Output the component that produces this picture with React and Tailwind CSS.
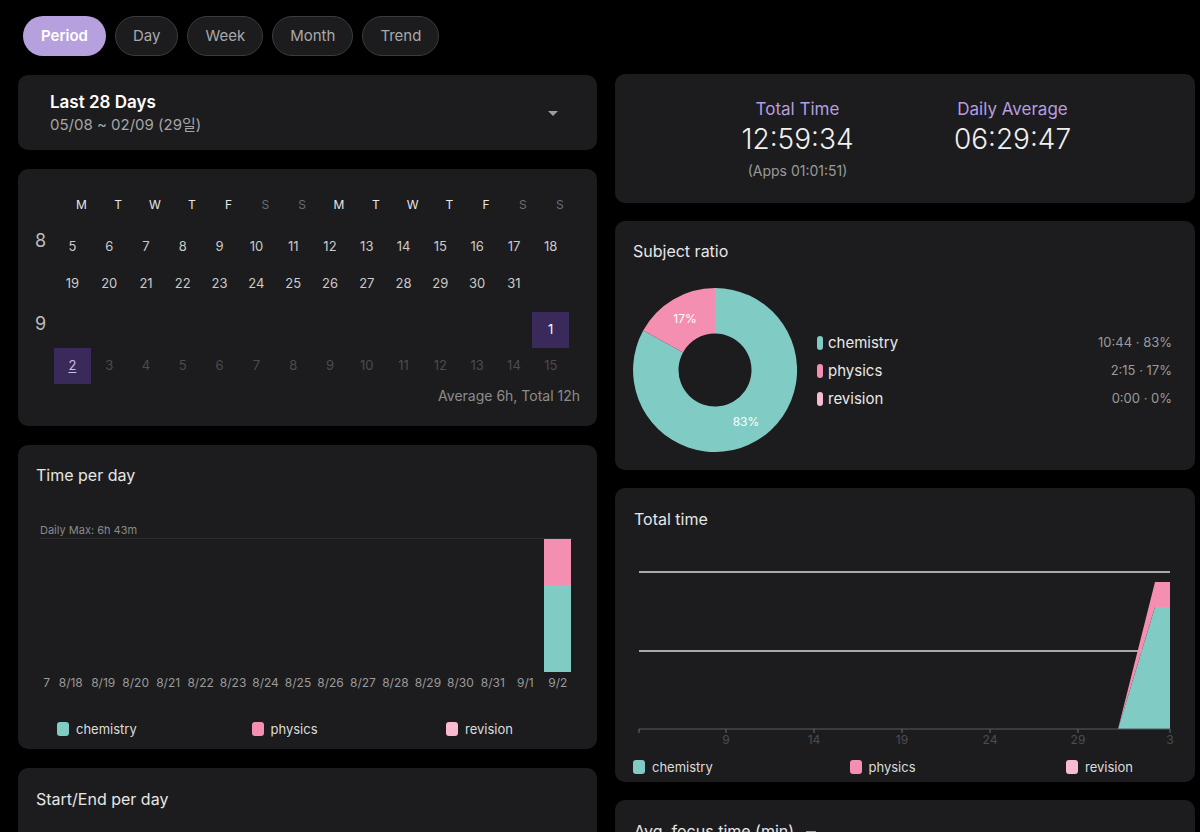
import React from 'react'

const TEAL = '#80cbc4'
const PINK = '#f48fb1'
const LPINK = '#f8bbd0'

const TABS = ['Period', 'Day', 'Week', 'Month', 'Trend']
const HEAD = ['M', 'T', 'W', 'T', 'F', 'S', 'S', 'M', 'T', 'W', 'T', 'F', 'S', 'S']

function Card({ className = '', children }) {
  return <div className={`bg-[#1c1c1e] rounded-[10px] ${className}`}>{children}</div>
}

function Tabs() {
  return (
    <div className="flex gap-[9px] pl-[23px] pt-[16px]">
      {TABS.map((t, i) =>
        i === 0 ? (
          <div key={t} className="h-[40px] px-[18px] rounded-full bg-[#b7a0de] text-white font-semibold text-[15px] flex items-center">
            {t}
          </div>
        ) : (
          <div key={t} className="h-[40px] px-[17px] rounded-full bg-[#1c1c1e] border border-[#3c3c3e] text-[#a9a9a9] text-[15px] flex items-center">
            {t}
          </div>
        )
      )}
    </div>
  )
}

function PeriodSelect() {
  return (
    <Card className="h-[75px] pl-[32px] pr-[38px] flex items-center justify-between">
      <div className="pt-[2px]">
        <div className="text-[17px] font-semibold text-white leading-[22px]">Last 28 Days</div>
        <div className="text-[15px] text-[#a6a6a6] leading-[22px] mt-[1px]">05/08 ~ 02/09 (29일)</div>
      </div>
      <svg width="12" height="7" viewBox="0 0 12 7" className="mt-[2px]">
        <polygon points="1,1 11,1 6,6" fill="#9d9d9d" />
      </svg>
    </Card>
  )
}

function DayCell({ d }) {
  if (!d) return <div className="w-[36.8px] h-[36px]" />
  let cls = 'text-[#cacaca]'
  if (d.dim) cls = 'text-[#4b4b4d]'
  if (d.hl) cls = 'bg-[#3a2a5c] text-white'
  return (
    <div className={`w-[36.8px] h-[36px] flex items-center justify-center text-[13px] ${cls}`}>
      <span className={d.u ? 'underline underline-offset-2 text-[#cbbfe4]' : ''}>{d.n}</span>
    </div>
  )
}

function CalRow({ label, days, className = '' }) {
  return (
    <div className={`flex ${className}`}>
      <div className="w-[36px] pl-[17px] text-[18px] leading-[24px] text-[#bdbdbd]">{label}</div>
      <div className="flex">
        {days.map((d, i) => (
          <DayCell key={i} d={d} />
        ))}
      </div>
    </div>
  )
}

function Calendar() {
  const r1 = Array.from({ length: 14 }, (_, i) => ({ n: i + 5 }))
  const r2 = Array.from({ length: 14 }, (_, i) => (i < 13 ? { n: i + 19 } : null))
  const r3 = Array.from({ length: 14 }, (_, i) => (i === 13 ? { n: 1, hl: true } : null))
  const r4 = Array.from({ length: 14 }, (_, i) => (i === 0 ? { n: 2, hl: true, u: true } : { n: i + 2, dim: true }))
  return (
    <Card className="h-[257px] pt-[26px] pr-[17px]">
      <div className="flex">
        <div className="w-[36px]" />
        <div className="flex ml-[9px]">
          {HEAD.map((h, i) => (
            <div
              key={i}
              className={`w-[36.8px] h-[20px] flex items-center justify-center text-[12px] ${i % 7 >= 5 ? 'text-[#6d6d6f]' : 'text-[#e6e6e6]'}`}
            >
              {h}
            </div>
          ))}
        </div>
      </div>
      <CalRow label="8" days={r1} className="mt-[14px]" />
      <CalRow label="" days={r2} className="mt-[1px]" />
      <CalRow label="9" days={r3} className="mt-[10px]" />
      <CalRow label="" days={r4} />
      <div className="text-right text-[14px] leading-[20px] text-[#8c8c8c] mt-[2px]">Average 6h, Total 12h</div>
    </Card>
  )
}

function Legend({ widthCls, padCls, className = '' }) {
  const items = [
    ['chemistry', 'bg-[#80cbc4]'],
    ['physics', 'bg-[#f48fb1]'],
    ['revision', 'bg-[#f8bbd0]'],
  ]
  return (
    <div className={`flex ${padCls} ${className}`}>
      {items.map(([n, c]) => (
        <div key={n} className={`${widthCls} shrink-0 flex items-center gap-[7px]`}>
          <div className={`w-[12px] h-[14px] rounded-[3px] ${c}`} />
          <span className="text-[13px] text-[#dcdcdc] leading-[20px]">{n}</span>
        </div>
      ))}
    </div>
  )
}

function TimePerDay() {
  const days = ['8/17', '8/18', '8/19', '8/20', '8/21', '8/22', '8/23', '8/24', '8/25', '8/26', '8/27', '8/28', '8/29', '8/30', '8/31', '9/1', '9/2']
  return (
    <Card className="h-[304px] pt-[18px]">
      <div className="pl-[18px] text-[16px] leading-[24px] text-[#e6e6e6]">Time per day</div>
      <div className="ml-[22px] mr-[23px] mt-[35px]">
        <div className="text-[11px] leading-[16px] text-[#8a8a8a]">Daily Max: 6h 43m</div>
        <div className="h-[134px] border-t border-[#2c2c2e] flex justify-end overflow-hidden">
          {days.map((d, i) => (
            <div key={d} className="w-[32.47px] shrink-0 flex flex-col justify-end items-center">
              {i === days.length - 1 && (
                <div className="w-[27px] h-full flex flex-col">
                  <div className="h-[46px] bg-[#f48fb1]" />
                  <div className="flex-1 bg-[#80cbc4]" />
                </div>
              )}
            </div>
          ))}
        </div>
        <div className="flex justify-end overflow-hidden mt-[3px] ml-[3px]">
          {days.map((d) => (
            <div key={d} className="w-[32.47px] shrink-0 text-center text-[12px] leading-[16px] text-[#9a9a9a] whitespace-nowrap">
              {d}
            </div>
          ))}
        </div>
      </div>
      <Legend widthCls="w-[194.5px]" padCls="pl-[39px]" className="mt-[28px]" />
    </Card>
  )
}

function Totals() {
  return (
    <Card className="h-[129px] pt-[23px] flex justify-center">
      <div className="w-[215px] flex flex-col items-center">
        <div className="text-[17px] leading-[24px] text-[#b69ddf]">Total Time</div>
        <div className="text-[28px] leading-[36px] font-light text-[#f0f0f0]">12:59:34</div>
        <div className="text-[14px] leading-[20px] text-[#9a9a9a] mt-[4px]">(Apps 01:01:51)</div>
      </div>
      <div className="w-[215px] flex flex-col items-center">
        <div className="text-[17px] leading-[24px] text-[#b69ddf]">Daily Average</div>
        <div className="text-[28px] leading-[36px] font-light text-[#f0f0f0]">06:29:47</div>
      </div>
    </Card>
  )
}

function SubjectRatio() {
  const rows = [
    ['chemistry', TEAL, '10:44 · 83%'],
    ['physics', PINK, '2:15 · 17%'],
    ['revision', LPINK, '0:00 · 0%'],
  ]
  return (
    <Card className="h-[249px] pt-[18px] pl-[18px] pr-[23px]">
      <div className="text-[16px] leading-[24px] text-[#e6e6e6]">Subject ratio</div>
      <div className="flex items-center mt-[25px]">
        <svg width="164" height="164" viewBox="0 0 164 164" className="shrink-0">
          <path d="M 82 0 A 82 82 0 1 1 10.2 42.5 L 50.03 64.41 A 36.5 36.5 0 1 0 82 45.5 Z" fill={TEAL} />
          <path d="M 82 0 A 82 82 0 0 0 10.2 42.5 L 50.03 64.41 A 36.5 36.5 0 0 1 82 45.5 Z" fill={PINK} />
          <text x="52" y="35" fill="#fff" fontSize="12" textAnchor="middle" fontFamily="Inter, sans-serif">17%</text>
          <text x="113" y="138" fill="#fff" fontSize="12" textAnchor="middle" fontFamily="Inter, sans-serif">83%</text>
        </svg>
        <div className="flex-1 ml-[20px] flex flex-col mt-[2px]">
          {rows.map(([n, c, v]) => (
            <div key={n} className="h-[28px] flex items-center">
              <div className="w-[6px] h-[14px] rounded-full" style={{ background: c }} />
              <span className="ml-[5px] text-[15px] text-[#e8e8e8] flex-1">{n}</span>
              <span className="text-[13px] text-[#9a9a9a]">{v}</span>
            </div>
          ))}
        </div>
      </div>
    </Card>
  )
}

function TotalTime() {
  const ticks = [[6, ''], [93, '9'], [181, '14'], [269, '19'], [357, '24'], [445, '29'], [537, '3']]
  return (
    <Card className="h-[294px] pt-[19px]">
      <div className="pl-[19px] text-[16px] leading-[24px] text-[#e6e6e6]">Total time</div>
      <svg width="546" height="190" viewBox="0 0 546 190" className="ml-[18px] mt-[30px] block">
        <line x1="6" y1="11" x2="537" y2="11" stroke="#d9d9d9" strokeWidth="1.5" />
        <line x1="6" y1="90" x2="537" y2="90" stroke="#d9d9d9" strokeWidth="1.5" />
        <polygon points="485,168 522,46 537,46 537,168" fill={TEAL} />
        <polygon points="485,168 522,21 537,21 537,46 522,46" fill={PINK} />
        <line x1="6" y1="168" x2="537" y2="168" stroke="#5a5a5c" strokeWidth="1" />
        {ticks.map(([x, l]) => (
          <g key={x}>
            <line x1={x} y1="168" x2={x} y2="172" stroke="#6a6a6c" strokeWidth="1" />
            <text x={x} y="183" fill="#4c4c4e" fontSize="12" textAnchor="middle" fontFamily="Inter, sans-serif">{l}</text>
          </g>
        ))}
      </svg>
      <Legend widthCls="w-[216.5px]" padCls="pl-[18px]" className="mt-[6px]" />
    </Card>
  )
}

export default function App() {
  return (
    <div className="w-[1200px] h-[832px] overflow-hidden bg-black" style={{ fontFamily: 'Inter, "Noto Sans CJK KR", sans-serif' }}>
      <Tabs />
      <div className="flex gap-[18px] pl-[18px] pr-[5px] mt-[18px]">
        <div className="w-[579px] flex flex-col gap-[19px] pt-[1px]">
          <PeriodSelect />
          <Calendar />
          <TimePerDay />
          <Card className="h-[200px] pt-[19px] pl-[18px]">
            <div className="text-[16px] leading-[24px] text-[#e6e6e6]">Start/End per day</div>
          </Card>
        </div>
        <div className="w-[580px] flex flex-col gap-[18px]">
          <Totals />
          <SubjectRatio />
          <TotalTime />
          <Card className="h-[200px] pt-[19px] pl-[19px]">
            <div className="flex items-center gap-[12px]">
              <span className="text-[16px] leading-[24px] text-[#e6e6e6]">Avg. focus time (min)</span>
              <div className="w-[10px] h-[1.5px] bg-[#9a9a9a] mt-[2px]" />
            </div>
          </Card>
        </div>
      </div>
    </div>
  )
}
